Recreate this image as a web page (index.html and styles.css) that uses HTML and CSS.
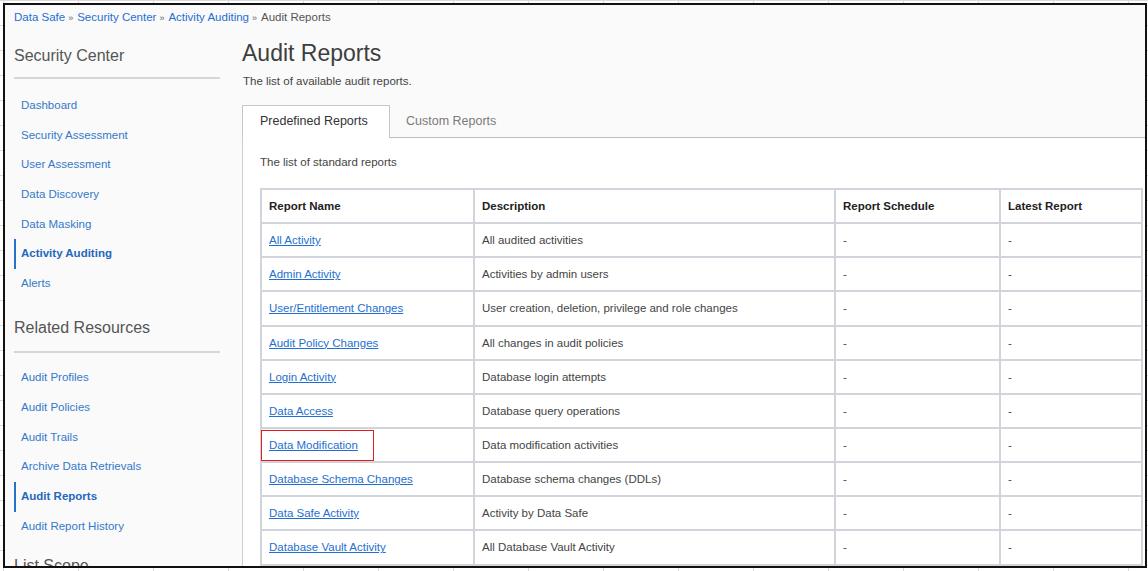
FILE: index.html
```html
<!DOCTYPE html>
<html lang="en">
<head>
<meta charset="utf-8">
<title>Audit Reports</title>
<link rel="stylesheet" href="styles.css">
</head>
<body>
<div class="frame">
  <div class="breadcrumb">
    <a href="#">Data Safe</a><span class="sep">»</span><a href="#">Security Center</a><span class="sep">»</span><a href="#">Activity Auditing</a><span class="sep">»</span><span class="current">Audit Reports</span>
  </div>
  <div class="layout">
    <aside class="sidebar">
      <h2 class="side-title first">Security Center</h2>
      <hr class="side-rule">
      <ul class="side-nav">
        <li><a href="#">Dashboard</a></li>
        <li><a href="#">Security Assessment</a></li>
        <li><a href="#">User Assessment</a></li>
        <li><a href="#">Data Discovery</a></li>
        <li><a href="#">Data Masking</a></li>
        <li class="active"><a href="#">Activity Auditing</a></li>
        <li><a href="#">Alerts</a></li>
      </ul>
      <h2 class="side-title second">Related Resources</h2>
      <hr class="side-rule rule2">
      <ul class="side-nav nav2">
        <li><a href="#">Audit Profiles</a></li>
        <li><a href="#">Audit Policies</a></li>
        <li><a href="#">Audit Trails</a></li>
        <li><a href="#">Archive Data Retrievals</a></li>
        <li class="active"><a href="#">Audit Reports</a></li>
        <li><a href="#">Audit Report History</a></li>
      </ul>
      <h2 class="side-title third">List Scope</h2>
    </aside>
    <main class="main">
      <h1 class="page-title">Audit Reports</h1>
      <p class="page-sub">The list of available audit reports.</p>
      <div class="tabs">
        <div class="tab active">Predefined Reports</div>
        <div class="tab">Custom Reports</div>
      </div>
      <div class="panel">
        <p class="panel-text">The list of standard reports</p>
        <table class="reports">
          <colgroup>
            <col class="c1"><col class="c2"><col class="c3"><col class="c4">
          </colgroup>
          <thead>
            <tr><th>Report Name</th><th>Description</th><th>Report Schedule</th><th>Latest Report</th></tr>
          </thead>
          <tbody>
            <tr><td><a href="#">All Activity</a></td><td>All audited activities</td><td>-</td><td>-</td></tr>
            <tr><td><a href="#">Admin Activity</a></td><td>Activities by admin users</td><td>-</td><td>-</td></tr>
            <tr><td><a href="#">User/Entitlement Changes</a></td><td>User creation, deletion, privilege and role changes</td><td>-</td><td>-</td></tr>
            <tr><td><a href="#">Audit Policy Changes</a></td><td>All changes in audit policies</td><td>-</td><td>-</td></tr>
            <tr><td><a href="#">Login Activity</a></td><td>Database login attempts</td><td>-</td><td>-</td></tr>
            <tr><td><a href="#">Data Access</a></td><td>Database query operations</td><td>-</td><td>-</td></tr>
            <tr><td class="marked"><a href="#">Data Modification</a><span class="highlight"></span></td><td>Data modification activities</td><td>-</td><td>-</td></tr>
            <tr><td><a href="#">Database Schema Changes</a></td><td>Database schema changes (DDLs)</td><td>-</td><td>-</td></tr>
            <tr><td><a href="#">Data Safe Activity</a></td><td>Activity by Data Safe</td><td>-</td><td>-</td></tr>
            <tr><td><a href="#">Database Vault Activity</a></td><td>All Database Vault Activity</td><td>-</td><td>-</td></tr>
            <tr><td></td><td></td><td></td><td></td></tr>
          </tbody>
        </table>
      </div>
    </main>
  </div>
</div>
</body>
</html>
```
FILE: styles.css
```css
html, body {
  margin: 0;
  padding: 0;
}
body {
  width: 1148px;
  height: 571px;
  overflow: hidden;
  background-color: #ffffff;
  background-image:
    repeating-linear-gradient(90deg, #dadada 0 1px, transparent 1px 75px),
    repeating-linear-gradient(180deg, #dadada 0 1px, transparent 1px 25px);
  background-position: 3px 0, 0 0;
  font-family: "Liberation Sans", Arial, sans-serif;
}
.frame {
  margin: 3px 0 0 3px;
  width: 1140px;
  height: 561px;
  border: 2px solid #111;
  overflow: hidden;
  background: #fafafa;
  box-sizing: content-box;
}
a {
  color: #2a72c9;
  text-decoration: none;
}
.breadcrumb {
  height: 24px;
  line-height: 24px;
  padding-left: 9px;
  font-size: 11.5px;
  color: #555;
  white-space: nowrap;
}
.breadcrumb a {
  color: #1f6fd0;
}
.breadcrumb .sep {
  display: inline-block;
  font-size: 9px;
  color: #666;
  margin: 0 4px 0 3px;
}
.layout {
  display: flex;
  align-items: flex-start;
}
.sidebar {
  width: 237px;
  flex: none;
  padding: 0 22px 0 9px;
  box-sizing: border-box;
}
.side-title {
  margin: 0;
  font-size: 16px;
  font-weight: normal;
  line-height: 24px;
  color: #555;
  white-space: nowrap;
}
.side-title.first { margin-top: 15px; }
.side-title.second { margin-top: 17px; }
.side-title.third { margin-top: 12px; }
.side-rule {
  margin: 9px 0 0 0;
  border: 0;
  height: 2px;
  background: #d6d6d6;
}
.side-rule.rule2 { margin-top: 11px; }
.side-nav {
  list-style: none;
  margin: 12px 0 0 0;
  padding: 0;
}
.side-nav.nav2 { margin-top: 10px; }
.side-nav li {
  height: 29.7px;
  line-height: 29.7px;
  border-left: 2px solid transparent;
  padding-left: 5px;
  font-size: 11.5px;
  white-space: nowrap;
}
.side-nav.nav2 li {
  height: 29.9px;
  line-height: 29.9px;
}
.side-nav li a {
  color: #3479c9;
}
.side-nav li.active {
  border-left-color: #2a72c9;
}
.side-nav li.active a {
  font-weight: bold;
  color: #2468bd;
}
.main {
  flex: 1;
  min-width: 0;
}
.page-title {
  margin: 9px 0 0 0;
  font-size: 23px;
  font-weight: normal;
  line-height: 30px;
  color: #3e3e3e;
}
.page-sub {
  margin: 5px 0 0 1px;
  font-size: 11.5px;
  line-height: 16px;
  color: #444;
}
.tabs {
  margin-top: 16px;
  display: flex;
  border-bottom: 1px solid #bdbdbd;
  height: 33px;
  box-sizing: border-box;
}
.tab {
  height: 33px;
  line-height: 32px;
  padding: 0 16px;
  font-size: 12.5px;
  color: #7a7a7a;
  box-sizing: border-box;
  white-space: nowrap;
}
.tab.active {
  width: 148px;
  padding: 0 17px;
  color: #333;
  background: #fff;
  border: 1px solid #c6c6c6;
  border-bottom: 0;
  line-height: 31px;
  height: 33px;
  margin-bottom: -1px;
}
.panel {
  background: #fff;
  border-left: 1px solid #cfcfcf;
  padding: 16px 0 0 17px;
  height: 440px;
}
.panel-text {
  margin: 0;
  font-size: 11.5px;
  line-height: 16px;
  color: #444;
}
.reports {
  margin-top: 18px;
  border-collapse: collapse;
  table-layout: fixed;
  width: 881px;
  font-size: 11.5px;
  border: 2px solid #d1d5db;
}
.c1 { width: 213px; }
.c2 { width: 361px; }
.c3 { width: 165px; }
.c4 { width: 142px; }
.reports th,
.reports td {
  height: 32.15px;
  padding: 0 0 0 7px;
  border: 2px solid #d1d5db;
  text-align: left;
  white-space: nowrap;
  overflow: hidden;
}
.reports th {
  font-weight: bold;
  color: #222;
}
.reports td {
  color: #444;
}
.reports td a {
  color: #1f6fd0;
  text-decoration: underline;
}
.reports td.marked {
  position: relative;
  overflow: visible;
}
.highlight {
  position: absolute;
  left: -1px;
  top: 1px;
  width: 113px;
  height: 31px;
  border: 1px solid #e8191f;
  box-sizing: border-box;
}
```
